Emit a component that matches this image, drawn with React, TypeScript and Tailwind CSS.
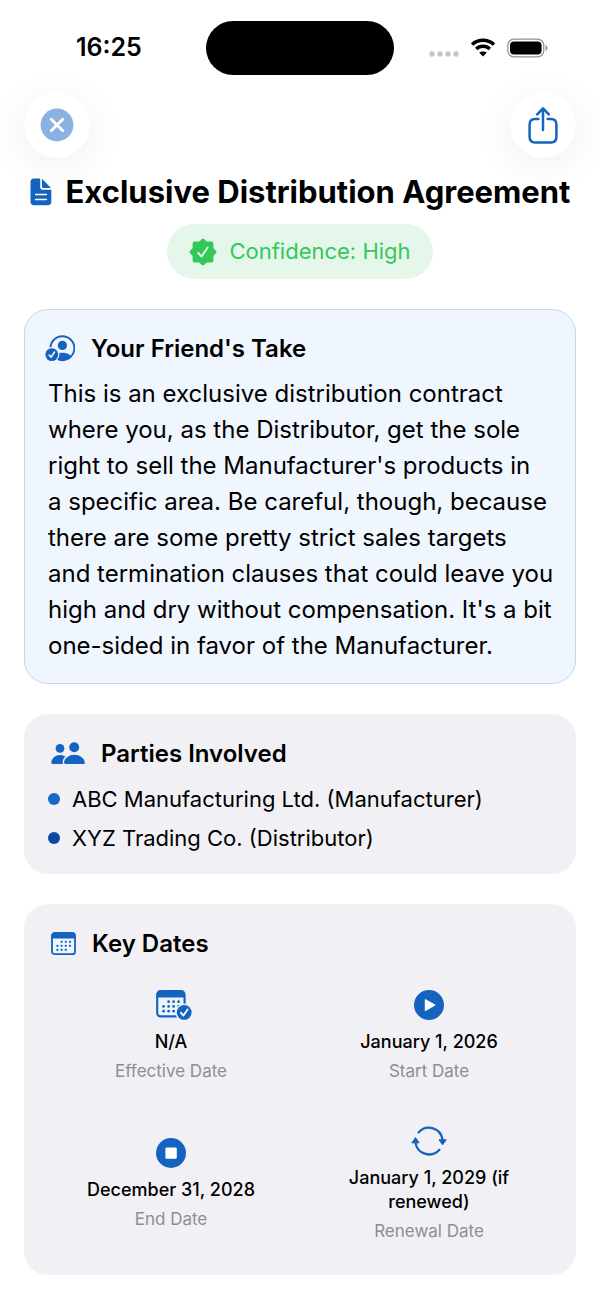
import type { ReactNode } from "react";

const BLUE = "#1463c0";

const parties = [
  { name: "ABC Manufacturing Ltd. (Manufacturer)", dot: "bg-[#1769c4]" },
  { name: "XYZ Trading Co. (Distributor)", dot: "bg-[#0f47a6]" },
];

const calendarDots = [
  [10.6, 9.8], [14.8, 9.8], [19, 9.8],
  [6.4, 13.8], [10.6, 13.8], [14.8, 13.8], [19, 13.8],
  [6.4, 17.8], [10.6, 17.8], [14.8, 17.8],
];

function StatusIcons() {
  return (
    <div className="flex items-center justify-end gap-3">
      <svg width="30" height="20" viewBox="0 0 30 20" fill="#c6c6c8" aria-hidden="true">
        <circle cx="3" cy="16" r="2.7" />
        <circle cx="11" cy="16" r="2.7" />
        <circle cx="19" cy="16" r="2.7" />
        <circle cx="27" cy="16" r="2.7" />
      </svg>
      <svg width="24" height="20" viewBox="0 0 24 20" fill="none" stroke="#000" strokeWidth="3.4" aria-hidden="true">
        <path d="M1 6.6 C7 .8 17 .8 23 6.6" />
        <path d="M5.2 11 C9 7.4 15 7.4 18.8 11" />
        <path d="M12 18.6 L8.2 14.8 C10.3 12.9 13.7 12.9 15.8 14.8 Z" fill="#000" stroke="none" />
      </svg>
      <svg width="41" height="20" viewBox="0 0 41 20" aria-hidden="true">
        <rect x="0.8" y="1.2" width="36" height="17.6" rx="6" fill="none" stroke="#909090" strokeWidth="1.2" />
        <rect x="3" y="3.4" width="31.6" height="13.2" rx="4" />
        <path d="M38.6 7 C41.2 8 41.2 12 38.6 13 Z" fill="#909090" />
      </svg>
    </div>
  );
}

function DocumentIcon() {
  return (
    <svg width="22" height="28" viewBox="0 0 22 28" fill={BLUE} aria-hidden="true">
      <path d="M4 0.5 H10.2 V9.5 Q10.2 11.8 12.5 11.8 H21.3 V23.5 Q21.3 27.3 17.5 27.3 H4 Q0.5 27.3 0.5 23.5 V4 Q0.5 0.5 4 0.5 Z" />
      <path d="M12 0.8 L21 10 H13.2 Q12 10 12 8.8 Z" />
      <path d="M5.6 16.6 H16.4 M5.6 21.4 H16.4" stroke="#fff" strokeWidth="1.5" strokeLinecap="round" />
    </svg>
  );
}

function SealIcon() {
  return (
    <svg width="28" height="28" viewBox="0 0 28 28" aria-hidden="true">
      <path
        d="M14 2.6 L17.2 5.6 H22.4 V10.8 L25.4 14 L22.4 17.2 V22.4 H17.2 L14 25.4 L10.8 22.4 H5.6 V17.2 L2.6 14 L5.6 10.8 V5.6 H10.8 Z"
        fill="#34c759"
        stroke="#34c759"
        strokeWidth="4"
        strokeLinejoin="round"
      />
      <path d="M9.2 14.8 L12.5 18.6 L18.7 9.5" fill="none" stroke="#eafaef" strokeWidth="1.8" strokeLinecap="round" strokeLinejoin="round" />
    </svg>
  );
}

function FriendIcon() {
  return (
    <svg width="30" height="28" viewBox="0 0 30 28" aria-hidden="true">
      <circle cx="17.4" cy="13.2" r="12" fill="none" stroke={BLUE} strokeWidth="1.9" />
      <circle cx="17.4" cy="10.4" r="4.6" fill={BLUE} />
      <path d="M8.8 21.6 C11 16.6 23.8 16.6 26 21.6 C23.6 24.4 20.8 25.6 17.4 25.6 C13.8 25.6 10.8 24 8.8 21.6 Z" fill={BLUE} />
      <circle cx="6.8" cy="19.6" r="7.6" fill="#f0f6fd" />
      <circle cx="6.8" cy="19.6" r="6.4" fill={BLUE} />
      <path d="M4.2 20 L6.1 22.2 L9.6 17" fill="none" stroke="#fff" strokeWidth="1.5" strokeLinecap="round" strokeLinejoin="round" />
    </svg>
  );
}

function PeopleIcon() {
  return (
    <svg width="34" height="24" viewBox="0 0 34 24" fill={BLUE} aria-hidden="true">
      <circle cx="9" cy="6.4" r="4.4" />
      <circle cx="23.2" cy="5.2" r="5" />
      <path d="M12 22 H1.6 Q0.2 22 0.2 20.6 C0.8 16 4.6 13 9 13 C11 13 12.8 13.6 14.4 14.6 C12.2 16.4 11.2 19 12 22 Z" />
      <path d="M14.4 22 Q12.9 22 13 20.4 C13.8 16 18.2 12.8 23.4 12.8 C28.6 12.8 33 16 33.8 20.4 Q34 22 32.4 22 Z" />
    </svg>
  );
}

function CalendarShape() {
  return (
    <>
      <rect x="1" y="1" width="23" height="21.2" rx="2.8" fill="#edf4fd" stroke={BLUE} strokeWidth="1.8" />
      <path d="M0.6 6.4 V3.6 Q0.6 0.4 3.8 0.4 H21.2 Q24.4 0.4 24.4 3.6 V6.4 Z" fill={BLUE} />
      {calendarDots.map(([x, y]) => (
        <circle key={`${x}-${y}`} cx={x} cy={y} r="1.15" fill={BLUE} />
      ))}
    </>
  );
}

function CalendarIcon() {
  return (
    <svg width="25" height="24" viewBox="0 0 25 24" aria-hidden="true">
      <CalendarShape />
    </svg>
  );
}

// left padding in the viewBox keeps the calendar body centred, not the badge
function CalendarCheckIcon() {
  return (
    <svg width="42" height="30" viewBox="-6 0 42 30" aria-hidden="true">
      <g transform="scale(1.19)">
        <CalendarShape />
      </g>
      <circle cx="28.2" cy="22.4" r="8.8" fill="#f1f0f5" />
      <circle cx="28.2" cy="22.4" r="7.4" fill={BLUE} />
      <path d="M25 22.8 L27.4 25.6 L31.6 19.4" fill="none" stroke="#fff" strokeWidth="1.8" strokeLinecap="round" strokeLinejoin="round" />
    </svg>
  );
}

function PlayIcon() {
  return (
    <svg width="30" height="30" viewBox="0 0 30 30" aria-hidden="true">
      <circle cx="15" cy="15" r="15" fill={BLUE} />
      <path d="M11.4 9.8 V20.4 L20.8 15.1 Z" fill="#fff" stroke="#fff" strokeWidth="1.2" strokeLinejoin="round" />
    </svg>
  );
}

function StopIcon() {
  return (
    <svg width="30" height="30" viewBox="0 0 30 30" aria-hidden="true">
      <circle cx="15" cy="15" r="15" fill={BLUE} />
      <rect x="9.4" y="9.4" width="11.4" height="11.4" rx="1.4" fill="#fff" />
    </svg>
  );
}

function RenewIcon() {
  return (
    <svg width="36" height="30" viewBox="0 0 36 30" aria-hidden="true">
      <g fill="none" stroke={BLUE} strokeWidth="2.3" strokeLinecap="round">
        <path d="M7.6 6.4 A13.8 13.8 0 0 1 31.6 14" />
        <path d="M28.4 23.8 A13.8 13.8 0 0 1 4.4 16" />
      </g>
      <path d="M28 13.8 H35.2 L31.6 18.8 Z M0.9 16.8 H8.1 L4.5 11.6 Z" fill={BLUE} stroke={BLUE} strokeLinejoin="round" />
    </svg>
  );
}

interface DateItemProps {
  icon: ReactNode;
  value: string;
  label: string;
}

function DateItem({ icon, value, label }: DateItemProps) {
  return (
    <div className="flex flex-col items-center justify-center text-center">
      {icon}
      <p className="mt-2.5 px-8 text-lg leading-6 font-medium text-black">{value}</p>
      <p className="mt-[7px] text-[17px] leading-5 text-[#8e8e93]">{label}</p>
    </div>
  );
}

function App() {
  return (
    <div className="bg-white pb-6 font-['Inter','Liberation_Sans',sans-serif] text-black">
      <div className="grid h-24 grid-cols-[1fr_188px_1fr] items-center px-13">
        <span className="pl-6 text-[25px] font-semibold">16:25</span>
        <div className="h-[54px] rounded-full bg-black" />
        <StatusIcons />
      </div>

      <header className="-mt-1 flex justify-between px-6">
        <button
          type="button"
          aria-label="Close"
          className="flex size-[66px] items-center justify-center rounded-full bg-white shadow-[0_8px_40px_rgba(0,0,0,0.07)]"
        >
          <svg width="34" height="34" viewBox="0 0 34 34" aria-hidden="true">
            <circle cx="17" cy="17" r="16.4" fill="#8ab1e0" />
            <path d="M11.2 11.2 L22.8 22.8 M22.8 11.2 L11.2 22.8" stroke="#fff" strokeWidth="2.8" strokeLinecap="round" />
          </svg>
        </button>
        <button
          type="button"
          aria-label="Share"
          className="flex size-[66px] items-center justify-center rounded-full bg-white shadow-[0_8px_40px_rgba(0,0,0,0.07)]"
        >
          <svg width="30" height="38" viewBox="0 0 30 38" fill="none" stroke={BLUE} strokeWidth="2.5" strokeLinecap="round" strokeLinejoin="round" aria-hidden="true">
            <path d="M10.4 13 H7 Q1.6 13 1.6 18.4 V31 Q1.6 36.4 7 36.4 H23 Q28.4 36.4 28.4 31 V18.4 Q28.4 13 23 13 H19.6" />
            <path d="M15 24 V2.6 M9.2 8.4 L15 2.4 L20.8 8.4" />
          </svg>
        </button>
      </header>

      <main className="px-6 pt-4">
        <div className="flex items-center justify-center gap-3.5">
          <DocumentIcon />
          <h1 className="text-[31px] leading-9 font-bold whitespace-nowrap">Exclusive Distribution Agreement</h1>
        </div>

        <div className="mt-3.5 flex justify-center">
          <div className="flex h-[55px] items-center gap-3 rounded-full bg-[#e5f7ea] px-[22px] text-[#34c759]">
            <SealIcon />
            <span className="text-[22px]">Confidence: High</span>
          </div>
        </div>

        <section className="mt-[30px] rounded-3xl border border-[#c3d8f0] bg-[#f0f6fd] px-5 pt-5 pb-[19px]">
          <div className="flex h-[38px] items-center gap-4">
            <FriendIcon />
            <h2 className="text-2xl font-semibold">Your Friend&apos;s Take</h2>
          </div>
          <p className="mt-2 pl-[3px] text-2xl leading-9">
            This is an exclusive distribution contract where you, as the Distributor, get the sole right to sell the
            Manufacturer&apos;s products in a&nbsp;specific area. Be careful, though, because there are some pretty
            strict sales targets and termination clauses that could leave you high and dry without compensation.
            It&apos;s a bit one-sided in favor of the Manufacturer.
          </p>
        </section>

        <section className="mt-[30px] rounded-3xl bg-[#f1f0f5] px-6 pt-5 pb-[21px]">
          <div className="flex h-10 items-center gap-4 pl-[3px]">
            <PeopleIcon />
            <h2 className="text-2xl font-semibold">Parties Involved</h2>
          </div>
          <ul className="mt-2.5 flex flex-col gap-[9px]">
            {parties.map((party) => (
              <li key={party.name} className="flex h-[30px] items-center gap-3 text-[22px]">
                <span className={`size-3 rounded-full ${party.dot}`} />
                {party.name}
              </li>
            ))}
          </ul>
        </section>

        <section className="mt-[30px] rounded-3xl bg-[#f1f0f5] px-6 pt-5 pb-[34px]">
          <div className="flex h-10 items-center gap-4 pl-[3px]">
            <CalendarIcon />
            <h2 className="text-2xl font-semibold">Key Dates</h2>
          </div>
          <div className="mt-[26px] grid grid-cols-2 gap-x-3 gap-y-[45px]">
            <DateItem icon={<CalendarCheckIcon />} value="N/A" label="Effective Date" />
            <DateItem icon={<PlayIcon />} value="January 1, 2026" label="Start Date" />
            <DateItem icon={<StopIcon />} value="December 31, 2028" label="End Date" />
            <DateItem icon={<RenewIcon />} value="January 1, 2029 (if renewed)" label="Renewal Date" />
          </div>
        </section>
      </main>
    </div>
  );
}

export default App;
